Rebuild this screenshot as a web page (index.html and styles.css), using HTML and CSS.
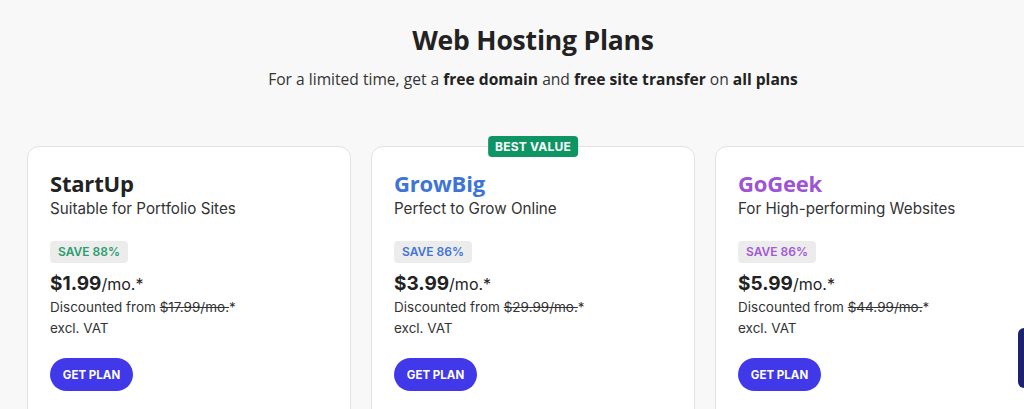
FILE: index.html
```html
<!DOCTYPE html>
<html lang="en">
<head>
  <meta charset="UTF-8">
  <title>Web Hosting Plans</title>
  <link rel="stylesheet" href="styles.css">
</head>
<body>
  <div class="page">
    <h1 class="title">Web Hosting Plans</h1>
    <p class="lead">For a limited time, get a <b>free domain</b> and <b>free site transfer</b> on <b>all plans</b></p>

    <div class="plans">
      <div class="plan">
        <h2 class="plan-name startup">StartUp</h2>
        <p class="plan-desc">Suitable for Portfolio Sites</p>
        <span class="save startup">SAVE 88%</span>
        <div class="price"><b>$1.99</b>/mo.*</div>
        <p class="note">Discounted from <s>$17.99/mo.</s>*</p>
        <p class="note">excl. VAT</p>
        <button class="btn">GET PLAN</button>
      </div>
      <div class="plan">
        <span class="ribbon">BEST VALUE</span>
        <h2 class="plan-name growbig">GrowBig</h2>
        <p class="plan-desc">Perfect to Grow Online</p>
        <span class="save growbig">SAVE 86%</span>
        <div class="price"><b>$3.99</b>/mo.*</div>
        <p class="note">Discounted from <s>$29.99/mo.</s>*</p>
        <p class="note">excl. VAT</p>
        <button class="btn">GET PLAN</button>
      </div>
      <div class="plan">
        <h2 class="plan-name gogeek">GoGeek</h2>
        <p class="plan-desc">For High-performing Websites</p>
        <span class="save gogeek">SAVE 86%</span>
        <div class="price"><b>$5.99</b>/mo.*</div>
        <p class="note">Discounted from <s>$44.99/mo.</s>*</p>
        <p class="note">excl. VAT</p>
        <button class="btn">GET PLAN</button>
      </div>
    </div>
  </div>
  <div class="chat-tab"></div>
</body>
</html>
```

FILE: styles.css
```css
* { margin: 0; padding: 0; box-sizing: border-box; }

body {
  background: #f8f8f8;
  color: #222;
  font-family: Inter, "Noto Sans", sans-serif;
  overflow: hidden;
  height: 409px;
}

/* content column is a bit wider than the window, so it sits off-centre */
.page {
  width: 1066px;
  padding-top: 24px;
  text-align: center;
}

.title {
  font-family: "Open Sans", sans-serif;
  font-size: 26.5px;
  font-weight: 700;
  line-height: 32px;
  color: #222;
  letter-spacing: -0.2px;
}

.lead {
  margin-top: 12px;
  font-family: "Open Sans", sans-serif;
  font-size: 15.6px;
  line-height: 22px;
  color: #333;
}
.lead b { font-weight: 700; color: #222; }

.plans {
  display: grid;
  grid-template-columns: repeat(3, 324px);
  gap: 20px;
  margin: 56px 0 0 27px;
  text-align: left;
}

.plan {
  position: relative;
  background: #fff;
  border: 1px solid #e2e2e2;
  border-radius: 12px;
  padding: 22px 22px 40px;
  height: 300px;
}

.ribbon {
  position: absolute;
  top: -11px; left: 50%;
  transform: translateX(-50%);
  background: #0e9564;
  color: #fff;
  font-size: 12px;
  font-weight: 700;
  line-height: 21px;
  padding: 0 7px;
  border-radius: 4px;
  letter-spacing: 0.2px;
}

.plan-name {
  font-family: "Open Sans", sans-serif;
  font-size: 22px;
  font-weight: 700;
  line-height: 28px;
  letter-spacing: -0.2px;
}
.plan-name.startup { color: #222; }
.plan-name.growbig { color: #3e74d6; }
.plan-name.gogeek { color: #9d55d3; }

.plan-desc {
  font-size: 15.2px;
  line-height: 24px;
  color: #333;
}

.save {
  display: inline-block;
  margin-top: 20px;
  background: #ececec;
  border-radius: 4px;
  font-size: 12px;
  font-weight: 600;
  line-height: 22px;
  padding: 0 8px;
}
.save.startup { color: #2a9d6e; }
.save.growbig { color: #4274d3; }
.save.gogeek { color: #a158d6; }

.price {
  margin-top: 8px;
  font-size: 16px;
  line-height: 26px;
  color: #222;
}
.price b { font-size: 19px; font-weight: 700; }

.note {
  font-size: 13.5px;
  line-height: 21px;
  color: #333;
}
.note s { text-decoration-thickness: 1px; }

.btn {
  display: block;
  margin-top: 19px;
  background: #4139e9;
  color: #fff;
  border: none;
  border-radius: 17px;
  height: 33px;
  width: 83px;
  font-family: Inter, sans-serif;
  font-size: 11.5px;
  font-weight: 700;
}

.chat-tab {
  position: fixed;
  right: -10px;
  top: 328px;
  width: 16px;
  height: 60px;
  background: #1c2170;
  border-radius: 6px;
}
```
